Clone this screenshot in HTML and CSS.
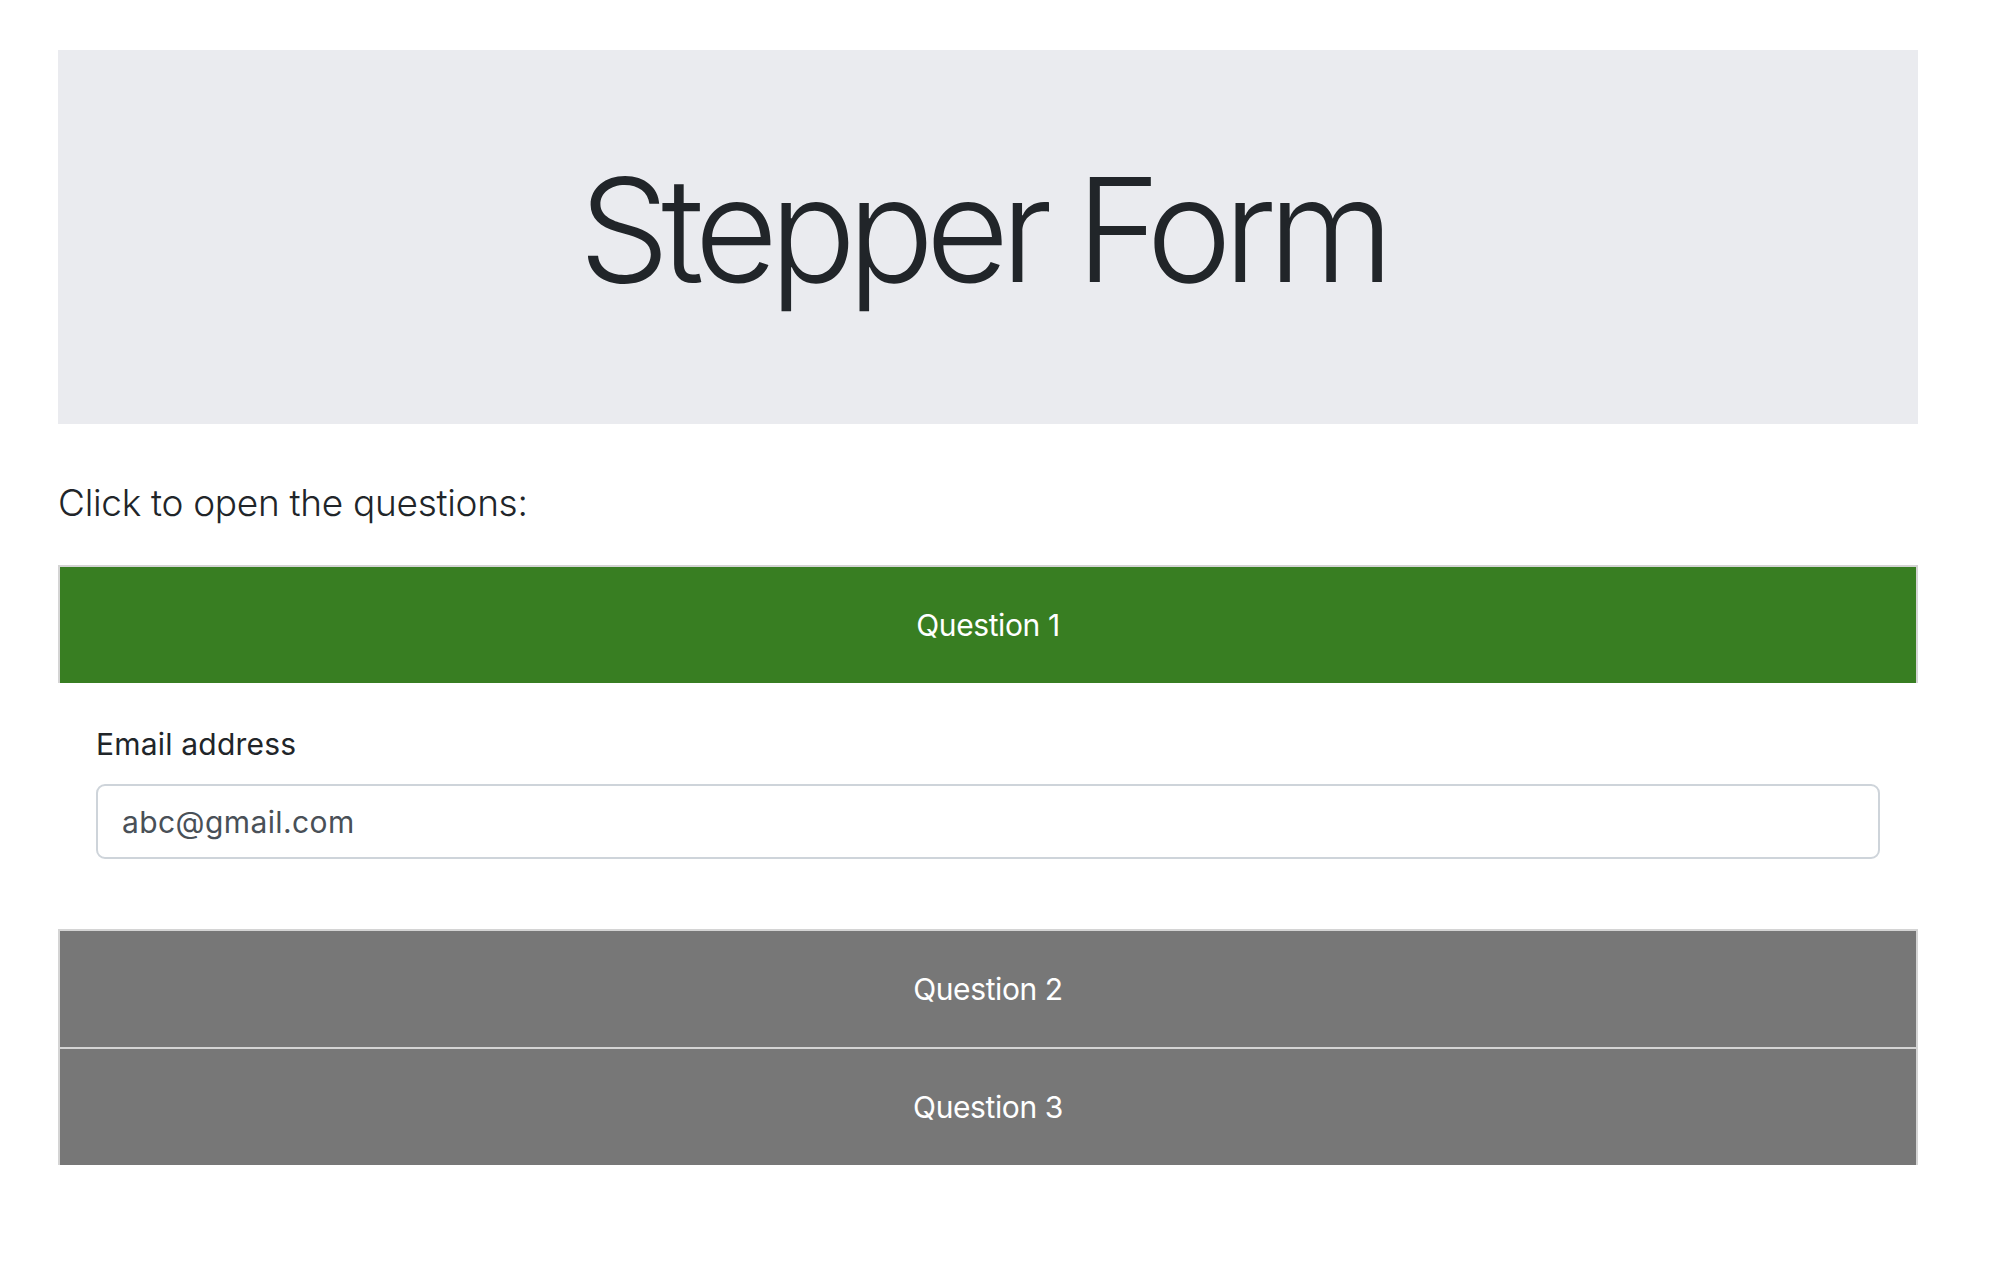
FILE: index.html
```html
<!DOCTYPE html>
<html lang="en">
<head>
<meta charset="utf-8">
<title>Stepper Form</title>
<link rel="stylesheet" href="styles.css">
</head>
<body>
<div class="page">
  <header class="jumbotron">
    <h1 class="title">Stepper Form</h1>
  </header>
  <p class="lead">Click to open the questions:</p>
  <div class="stepper">
    <button class="step step-active" type="button">Question 1</button>
    <div class="step-body">
      <label class="field-label" for="email">Email address</label>
      <input class="field-input" id="email" type="email" value="abc@gmail.com">
    </div>
    <button class="step" type="button">Question 2</button>
    <button class="step" type="button">Question 3</button>
  </div>
</div>
</body>
</html>
```
FILE: styles.css
```css
* { box-sizing: border-box; }
html, body { margin: 0; padding: 0; background: #ffffff; }
body {
  font-family: Inter, "Noto Sans", "Liberation Sans", sans-serif;
  color: #212529;
}
.page {
  padding: 50px 76px 0 58px;
}
.jumbotron {
  height: 374px;
  background: #eaebef;
  padding-top: 94px;
}
.title {
  margin: 0;
  padding-right: 12px;
  font-size: 144px;
  font-weight: 300;
  line-height: 1.2;
  letter-spacing: -8.5px;
  text-align: center;
  color: #212529;
}
.lead {
  margin: 51px 0 34px;
  font-size: 37px;
  font-weight: 300;
  line-height: 56px;
  letter-spacing: -0.3px;
  color: #212529;
}
.stepper {
  display: flex;
  flex-direction: column;
}
.step {
  display: block;
  width: 100%;
  height: 118px;
  margin: 0;
  padding: 0;
  border: 2px solid #d4d4d4;
  border-bottom: 0;
  background: #777777;
  color: #ffffff;
  font-family: Inter, "Noto Sans", "Liberation Sans", sans-serif;
  font-size: 30px;
  font-weight: 400;
  letter-spacing: -0.4px;
  text-align: center;
  cursor: pointer;
}
.step-active {
  background: #387e22;
}
.step-body {
  display: flex;
  flex-direction: column;
  padding: 39px 38px 70px;
}
.field-label {
  font-size: 30px;
  line-height: 44px;
  letter-spacing: 0.2px;
  color: #212529;
  margin-bottom: 18px;
}
.field-input {
  height: 75px;
  width: 100%;
  border: 2px solid #ced4da;
  border-radius: 9px;
  padding: 0 24px;
  font-family: Inter, "Noto Sans", "Liberation Sans", sans-serif;
  font-size: 30px;
  letter-spacing: 0.4px;
  color: #495057;
  background: #ffffff;
  outline: none;
}
```
